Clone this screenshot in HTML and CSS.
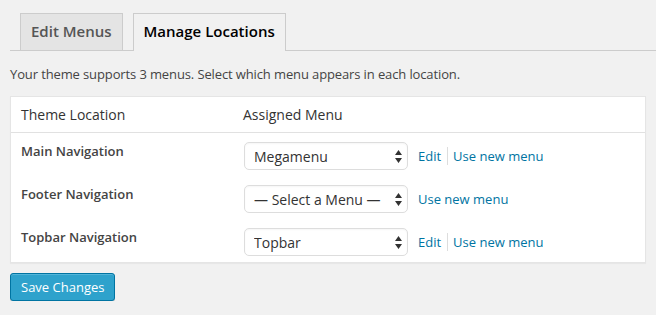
FILE: index.html
```html
<!DOCTYPE html>
<html lang="en">
<head>
    <meta charset="UTF-8">
    <meta name="viewport" content="width=device-width, initial-scale=1.0">
    <title>Menus</title>
    <link rel="stylesheet" href="styles.css">
</head>
<body>
    <div class="wrap">
        <div class="nav-tab-wrapper">
            <a href="#" class="nav-tab">Edit Menus</a>
            <a href="#" class="nav-tab nav-tab-active">Manage Locations</a>
        </div>

        <p class="intro">Your theme supports 3 menus. Select which menu appears in each location.</p>

        <table class="locations">
            <thead>
                <tr>
                    <th class="col-location">Theme Location</th>
                    <th>Assigned Menu</th>
                </tr>
            </thead>
            <tbody>
                <tr>
                    <th class="location-name">Main Navigation</th>
                    <td>
                        <div class="menu-cell">
                            <div class="select-wrap">
                                <select>
                                    <option>Megamenu</option>
                                    <option>Topbar</option>
                                </select>
                                <svg class="select-arrows" viewBox="0 0 7 13"><path d="M3.5 0L7 5H0z M3.5 13L7 8H0z"/></svg>
                            </div>
                            <a href="#" class="menu-link">Edit</a>
                            <span class="sep"></span>
                            <a href="#" class="menu-link">Use new menu</a>
                        </div>
                    </td>
                </tr>
                <tr>
                    <th class="location-name">Footer Navigation</th>
                    <td>
                        <div class="menu-cell">
                            <div class="select-wrap">
                                <select>
                                    <option>— Select a Menu —</option>
                                    <option>Megamenu</option>
                                    <option>Topbar</option>
                                </select>
                                <svg class="select-arrows" viewBox="0 0 7 13"><path d="M3.5 0L7 5H0z M3.5 13L7 8H0z"/></svg>
                            </div>
                            <a href="#" class="menu-link">Use new menu</a>
                        </div>
                    </td>
                </tr>
                <tr>
                    <th class="location-name">Topbar Navigation</th>
                    <td>
                        <div class="menu-cell">
                            <div class="select-wrap">
                                <select>
                                    <option>Topbar</option>
                                    <option>Megamenu</option>
                                </select>
                                <svg class="select-arrows" viewBox="0 0 7 13"><path d="M3.5 0L7 5H0z M3.5 13L7 8H0z"/></svg>
                            </div>
                            <a href="#" class="menu-link">Edit</a>
                            <span class="sep"></span>
                            <a href="#" class="menu-link">Use new menu</a>
                        </div>
                    </td>
                </tr>
            </tbody>
        </table>

        <button class="button-primary">Save Changes</button>
    </div>
</body>
</html>
```

FILE: styles.css
```css
body {
    margin: 0;
    background: #f1f1f1;
    color: #444;
    font-family: 'Open Sans', sans-serif;
    font-size: 13px;
}
.wrap {
    padding: 0 10px;
}
.nav-tab-wrapper {
    display: flex;
    align-items: flex-end;
    gap: 10px;
    padding: 13px 0 0 10px;
    margin-right: -10px;
    border-bottom: 1px solid #ccc;
}
.nav-tab {
    display: block;
    padding: 5px 10px 6px;
    border: 1px solid #ccc;
    border-bottom: none;
    background: #e4e4e4;
    color: #555;
    font-size: 15px;
    font-weight: 600;
    line-height: 25px;
    text-decoration: none;
}
.nav-tab-active {
    background: #f1f1f1;
    color: #000;
    padding-bottom: 7px;
    margin-bottom: -1px;
}
.intro {
    margin: 13px 0 12px;
    line-height: 20px;
    letter-spacing: -0.12px;
}
.locations {
    width: 100%;
    border: 1px solid #e5e5e5;
    border-spacing: 0;
    background: #fff;
    box-shadow: 0 1px 1px rgba(0, 0, 0, 0.04);
}
.locations thead th {
    padding: 8px 10px;
    border-bottom: 1px solid #e1e1e1;
    font-size: 14px;
    font-weight: 400;
    line-height: 19px;
    text-align: left;
    color: #333;
}
.locations .col-location {
    width: 202px;
}
.location-name {
    padding: 10px 10px 0;
    vertical-align: top;
    text-align: left;
    font-weight: 600;
    line-height: 16px;
    color: #444;
}
.locations td {
    padding: 8px 10px 5px;
}
.menu-cell {
    display: flex;
    align-items: center;
}
.select-wrap {
    position: relative;
    margin: 1px 10px 1px 1px;
}
.select-wrap select {
    display: block;
    width: 164px;
    height: 28px;
    padding: 0 24px 0 9px;
    border: 1px solid #ddd;
    border-radius: 5px;
    background: #fff;
    color: #333;
    font-family: 'Open Sans', sans-serif;
    font-size: 14px;
    -webkit-appearance: none;
    appearance: none;
    box-shadow: inset 0 1px 2px rgba(0, 0, 0, 0.04);
    outline: none;
}
.select-arrows {
    position: absolute;
    right: 6px;
    top: 8px;
    width: 7px;
    height: 13px;
    fill: #333;
    pointer-events: none;
}
.menu-link {
    color: #0074a2;
    text-decoration: none;
}
.sep {
    width: 1px;
    height: 18px;
    background: #ddd;
    margin: 0 5px 0 6px;
}
.button-primary {
    margin-top: 10px;
    height: 28px;
    padding: 0 10px 1px;
    border: 1px solid #0074a2;
    border-radius: 3px;
    background: #2ea2cc;
    color: #fff;
    font-family: 'Open Sans', sans-serif;
    font-size: 13px;
    line-height: 26px;
    box-shadow: inset 0 1px 0 rgba(120, 200, 230, 0.5), 0 1px 0 rgba(0, 0, 0, 0.15);
    cursor: pointer;
}
```
